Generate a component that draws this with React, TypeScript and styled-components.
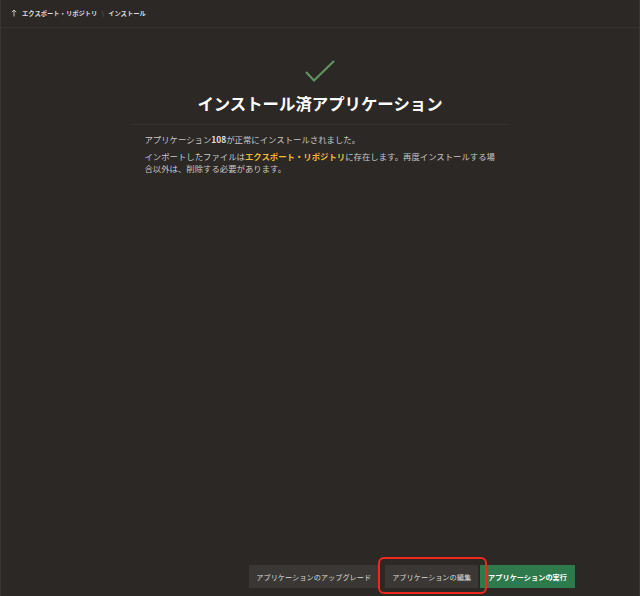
import React from 'react'
import styled, {createGlobalStyle} from 'styled-components'

const GlobalStyle = createGlobalStyle`
    html, body {
        margin: 0;
        padding: 0;
        background: #2b2826;
    }

    body {
        font-family: 'Noto Sans CJK JP', 'Noto Sans', sans-serif;
    }
`

const Page = styled.div`
    position: relative;
    width: 640px;
    height: 596px;
    box-sizing: border-box;
    border-left: 1px solid #383533;
    border-right: 1px solid #383533;
    background: #2b2826;
    display: flex;
    flex-direction: column;
`

const Header = styled.div`
    height: 28px;
    box-sizing: border-box;
    border-bottom: 1px solid #363331;
    display: flex;
    align-items: center;
    padding: 0 0 1px 10px;
    gap: 5px;
    color: #dcdcdc;
    font-size: 6.3px;
    font-weight: 700;
`

const Crumb = styled.span`
    white-space: nowrap;
`

const Sep = styled.span`
    color: #6a6664;
    font-weight: 400;
    font-size: 7px;
    margin: 0 -1px;
`

const Main = styled.div`
    flex: 1;
    display: flex;
    flex-direction: column;
    align-items: center;
    padding-top: 32px;
`

const Title = styled.h1`
    margin: 8px 0 0;
    font-size: 16.4px;
    line-height: 22px;
    font-weight: 700;
    color: #ffffff;
    white-space: nowrap;
`

const Content = styled.div`
    width: 377px;
    margin-top: 10px;
    border-top: 1px solid #363331;
    padding: 8px 13px 0;
    box-sizing: border-box;
`

const Para = styled.p`
    margin: 0 0 5px;
    font-size: 8.4px;
    line-height: 12px;
    color: #c9c6c4;
`

const Strong = styled.b`
    font-weight: 700;
    color: #e2e0de;
`

const Link = styled.b`
    font-weight: 700;
    color: #f1b935;
`

const Footer = styled.div`
    display: flex;
    justify-content: flex-end;
    align-items: center;
    padding: 0 64px 8px 0;
`

const Button = styled.button<{ $primary?: boolean }>`
    height: 23px;
    border: none;
    padding: 0 ${({$primary}) => $primary ? '8px' : '7px'};
    margin-left: ${({$primary}) => $primary ? '2px' : '7px'};
    font-family: 'Noto Sans CJK JP', sans-serif;
    font-size: 7.2px;
    font-weight: ${({$primary}) => $primary ? 700 : 400};
    color: ${({$primary}) => $primary ? '#ffffff' : '#dddbd9'};
    background: ${({$primary}) => $primary ? '#2f7a4d' : '#3a3735'};
    white-space: nowrap;
`

const Highlight = styled.div`
    position: absolute;
    left: 377px;
    top: 557px;
    width: 109px;
    height: 37px;
    box-sizing: border-box;
    border: 2px solid #f0281e;
    border-radius: 6px;
    pointer-events: none;
`

function UpArrow() {
    return (
        <svg width="6" height="8" viewBox="0 0 6 8">
            <path d="M3 7.5V1M0.8 3.2L3 1L5.2 3.2" stroke="#cfcfcf" strokeWidth="0.9" fill="none"/>
        </svg>
    )
}

function Check() {
    return (
        <svg width="32" height="24" viewBox="0 0 32 24">
            <path d="M2 12L10 20.5L30 1" stroke="#5e9460" strokeWidth="2.2" fill="none"/>
        </svg>
    )
}

export default function App() {
    return (
        <Page>
            <GlobalStyle/>
            <Header>
                <UpArrow/>
                <Crumb>エクスポート・リポジトリ</Crumb>
                <Sep>\</Sep>
                <Crumb>インストール</Crumb>
            </Header>
            <Main>
                <Check/>
                <Title>インストール済アプリケーション</Title>
                <Content>
                    <Para>アプリケーション<Strong>108</Strong>が正常にインストールされました。</Para>
                    <Para>
                        インポートしたファイルは<Link>エクスポート・リポジトリ</Link>に存在します。再度インストールする場合以外は、削除する必要があります。
                    </Para>
                </Content>
            </Main>
            <Footer>
                <Button>アプリケーションのアップグレード</Button>
                <Button>アプリケーションの編集</Button>
                <Button $primary>アプリケーションの実行</Button>
            </Footer>
            <Highlight/>
        </Page>
    )
}
